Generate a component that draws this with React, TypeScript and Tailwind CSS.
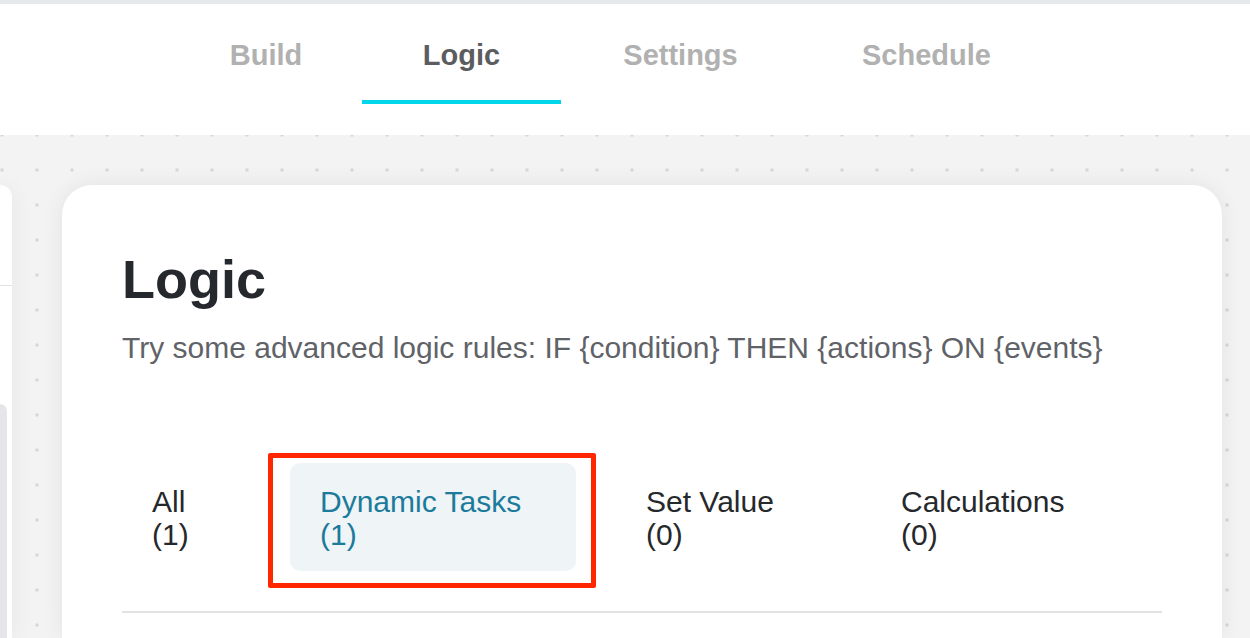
import React from 'react';

const navTabs = [
  { label: 'Build', width: 'w-[192px]', active: false },
  { label: 'Logic', width: 'w-[199px]', active: true },
  { label: 'Settings', width: 'w-[239px]', active: false },
  { label: 'Schedule', width: 'w-[253px]', active: false },
];

const ruleTabs = [
  { label: 'All', count: 1, width: 'w-[128px]', active: false },
  { label: 'Dynamic Tasks', count: 1, width: 'w-[286px]', active: true },
  { label: 'Set Value', count: 0, width: 'w-[215px]', active: false },
  { label: 'Calculations', count: 0, width: 'w-[250px]', active: false },
];

export default function App() {
  return (
    <div className="h-[638px] w-full overflow-hidden flex flex-col bg-white font-['Liberation_Sans',Arial,sans-serif]">
      {/* Top navigation */}
      <header className="h-[135px] shrink-0 border-t-4 border-[#e7e8ea] bg-white">
        <nav className="flex pl-[170px]">
          {navTabs.map((tab) => (
            <div key={tab.label} className={`${tab.width} flex flex-col items-center pt-[37px]`}>
              <span
                className={`text-[29px] leading-[28px] font-bold ${tab.active ? 'text-[#5b5c5e]' : 'text-[#b1b1b1]'}`}
              >
                {tab.label}
              </span>
              <div className={`mt-[31px] h-[4px] w-full ${tab.active ? 'bg-[#00d7ea]' : 'bg-transparent'}`}></div>
            </div>
          ))}
        </nav>
      </header>

      {/* Dotted canvas */}
      <div className="flex-1 flex bg-[#f3f3f3] bg-[radial-gradient(circle,#d6d6d6_1.8px,transparent_2px)] bg-[size:35px_35px] bg-[position:19.5px_-17.5px]">
        {/* Side panel, mostly off screen */}
        <div className="w-[12px] shrink-0 mt-[50px] bg-white rounded-tr-[24px] shadow-[0_0_22px_rgba(0,0,0,0.07)] flex flex-col">
          <div className="h-[101px] border-b border-[#e2e2e2]"></div>
          <div className="mt-[118px] w-[7px] flex-1 rounded-tr-[8px] bg-[#e4e6e7]"></div>
        </div>

        {/* Logic card */}
        <div className="ml-[50px] w-[1160px] shrink-0 mt-[50px] bg-white rounded-t-[30px] shadow-[0_0_22px_rgba(0,0,0,0.07)] px-[60px] pt-[67px]">
          <h1 className="text-[54px] leading-[54px] font-bold text-[#25292d]">Logic</h1>
          <p className="mt-[27px] text-[30px] leading-[30px] text-[#5f6368] whitespace-nowrap">
            Try some advanced logic rules: IF {'{condition}'} THEN {'{actions}'} ON {'{events}'}
          </p>

          <div className="mt-[100px] flex gap-[40px]">
            {ruleTabs.map((tab) => (
              <div key={tab.label} className={`relative ${tab.width}`}>
                <div
                  className={`px-[30px] pt-[22px] pb-[20px] rounded-[10px] text-[30px] leading-[33px] ${
                    tab.active ? 'bg-[#eff4f7] text-[#1b7b9c]' : 'text-[#26292c]'
                  }`}
                >
                  <div className="whitespace-nowrap">{tab.label}</div>
                  <div>({tab.count})</div>
                </div>
                {tab.active && (
                  <div className="absolute -left-[22px] -top-[10px] -right-[20px] -bottom-[17px] border-[5px] border-[#ff2600] rounded-[2px] pointer-events-none"></div>
                )}
              </div>
            ))}
          </div>

          <div className="mt-[40px] h-[2px] bg-[#e2e2e2]"></div>
        </div>
      </div>
    </div>
  );
}
